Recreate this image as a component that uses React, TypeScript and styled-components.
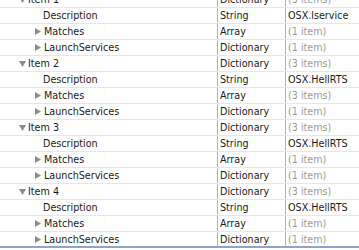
import React from "react";
import styled, { createGlobalStyle } from "styled-components";

const GlobalStyle = createGlobalStyle`
  html, body {
    margin: 0;
    padding: 0;
    background: #ffffff;
    overflow: hidden;
  }
`;

const Outline = styled.div`
  width: 359px;
  height: 250px;
  overflow: hidden;
  font-family: "DejaVu Sans", Verdana, sans-serif;
  font-size: 9.6px;
  color: #1a1a1a;
`;

const Rows = styled.div`
  margin-top: -8px;
  display: flex;
  flex-direction: column;
`;

const Row = styled.div<{ $last?: boolean }>`
  display: grid;
  grid-template-columns: 217px 68px 1fr;
  height: 16px;
  box-sizing: border-box;
  border-bottom: ${(p) => (p.$last ? "2px solid #8aa6cc" : "1px solid #e6e6e6")};
  line-height: 15px;
`;

const KeyCell = styled.div<{ $depth: number }>`
  display: flex;
  align-items: center;
  padding-left: ${(p) => (p.$depth === 0 ? 19 : 35)}px;
  white-space: nowrap;
`;

const Disclosure = styled.span`
  width: 8px;
  height: 15px;
  margin-right: 1px;
  display: flex;
  align-items: center;
  svg {
    display: block;
  }
`;

const Spacer = styled.span`
  width: 8px;
`;

const Cell = styled.div<{ $muted?: boolean }>`
  border-left: 1px solid #b4b4b4;
  padding-left: 2px;
  white-space: nowrap;
  overflow: hidden;
  color: ${(p) => (p.$muted ? "#9a9a9a" : "#1a1a1a")};
`;

type Item = {
  key: string;
  depth: number;
  open?: boolean;
  expandable?: boolean;
  type: string;
  value: string;
  muted?: boolean;
};

const Triangle = ({ open }: { open?: boolean }) =>
  open ? (
    <svg width="7" height="6" viewBox="0 0 7 6">
      <path d="M0 0 L7 0 L3.5 6 Z" fill="#8c8c8c" />
    </svg>
  ) : (
    <svg width="6" height="7" viewBox="0 0 6 7">
      <path d="M0 0 L6 3.5 L0 7 Z" fill="#8c8c8c" />
    </svg>
  );

const buildRows = (): Item[] => {
  const rows: Item[] = [];
  const values = ["OSX.lservice", "OSX.HellRTS", "OSX.HellRTS", "OSX.HellRTS"];
  const matches = ["(1 item)", "(3 items)", "(1 item)", "(1 item)"];
  values.forEach((v, i) => {
    rows.push({ key: `Item ${i + 1}`, depth: 0, open: true, expandable: true, type: "Dictionary", value: "(3 items)", muted: true });
    rows.push({ key: "Description", depth: 1, type: "String", value: v });
    rows.push({ key: "Matches", depth: 1, expandable: true, type: "Array", value: matches[i], muted: true });
    rows.push({ key: "LaunchServices", depth: 1, expandable: true, type: "Dictionary", value: "(1 item)", muted: true });
  });
  return rows;
};

const App = () => {
  const rows = buildRows();
  return (
    <>
      <GlobalStyle />
      <Outline>
        <Rows>
          {rows.map((r, i) => (
            <Row key={i} $last={i === rows.length - 1}>
              <KeyCell $depth={r.depth}>
                {r.expandable ? (
                  <Disclosure>
                    <Triangle open={r.open} />
                  </Disclosure>
                ) : (
                  <Spacer />
                )}
                {r.key}
              </KeyCell>
              <Cell>{r.type}</Cell>
              <Cell $muted={r.muted}>{r.value}</Cell>
            </Row>
          ))}
        </Rows>
      </Outline>
    </>
  );
};

export default App;
